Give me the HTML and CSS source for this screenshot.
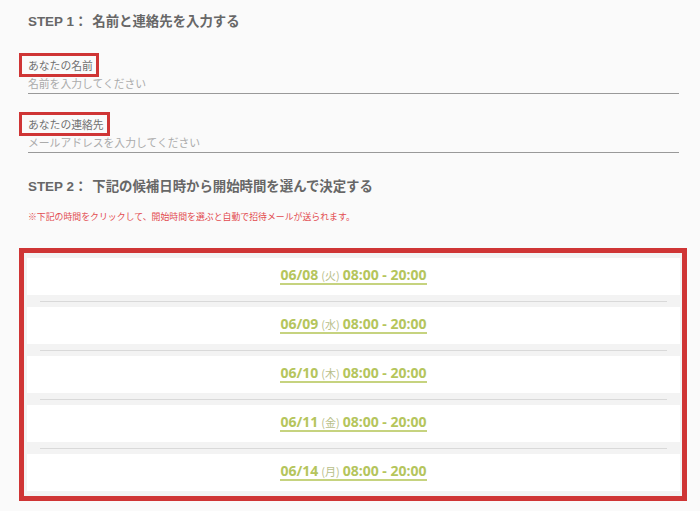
FILE: index.html
```html
<!DOCTYPE html>
<html lang="ja">
<head>
<meta charset="utf-8">
<title>日程調整</title>
<link rel="stylesheet" href="styles.css">
</head>
<body>
<main class="page">
  <h2 class="step"><span class="step-no">STEP 1：</span>名前と連絡先を入力する</h2>

  <div class="field field-first">
    <label class="field-label" for="name">あなたの名前</label>
    <input class="field-input" id="name" type="text" placeholder="名前を入力してください">
  </div>

  <div class="field">
    <label class="field-label" for="mail">あなたの連絡先</label>
    <input class="field-input" id="mail" type="text" placeholder="メールアドレスを入力してください">
  </div>

  <h2 class="step step-second"><span class="step-no">STEP 2：</span>下記の候補日時から開始時間を選んで決定する</h2>
  <p class="note">※下記の時間をクリックして、開始時間を選ぶと自動で招待メールが送られます。</p>

  <section class="slots">
    <div class="slot"><a class="slot-link" href="#"><span>06/08</span><span class="wd">(火)</span><span>08:00 - 20:00</span></a></div>
    <hr class="sep">
    <div class="slot"><a class="slot-link" href="#"><span>06/09</span><span class="wd">(水)</span><span>08:00 - 20:00</span></a></div>
    <hr class="sep">
    <div class="slot"><a class="slot-link" href="#"><span>06/10</span><span class="wd">(木)</span><span>08:00 - 20:00</span></a></div>
    <hr class="sep">
    <div class="slot"><a class="slot-link" href="#"><span>06/11</span><span class="wd">(金)</span><span>08:00 - 20:00</span></a></div>
    <hr class="sep">
    <div class="slot"><a class="slot-link" href="#"><span>06/14</span><span class="wd">(月)</span><span>08:00 - 20:00</span></a></div>
  </section>
</main>
</body>
</html>
```

FILE: styles.css
```css
html, body {
  margin: 0;
  padding: 0;
  background: #fafafa;
}

.page {
  padding: 12px 21px 0 28px;
  font-family: "Noto Sans CJK JP", sans-serif;
}

.step {
  margin: 0;
  font-family: "Liberation Sans", "Noto Sans CJK JP", sans-serif;
  font-size: 13.4px;
  line-height: 20px;
  font-weight: bold;
  color: #676767;
}

.step-no {
  margin-right: 5px;
}

.step-second {
  margin-top: 24px;
}

.field {
  display: flex;
  flex-direction: column;
  align-items: flex-start;
  margin-top: 18px;
}

.field-first {
  margin-top: 21px;
}

.field-label {
  display: inline-block;
  margin-left: -9px;
  padding: 1px 3px 1px 6px;
  border: 3px solid #cf3535;
  font-size: 10.8px;
  line-height: 16px;
  color: #707070;
}

.field-input {
  box-sizing: border-box;
  width: 100%;
  margin: -3px 0 0 0;
  padding: 0 0 2px 0;
  border: none;
  border-bottom: 1px solid #999;
  background: transparent;
  font-family: "Noto Sans CJK JP", sans-serif;
  font-size: 10.8px;
  line-height: 16px;
  height: 20px;
  color: #555;
  outline: none;
}

.field-input::placeholder {
  color: #ababab;
}

.note {
  margin: 14px 0 0 0;
  font-size: 8.9px;
  line-height: 12px;
  color: #e24a4f;
}

.slots {
  margin: 25px -8px 0 -9px;
  border: 5px solid #cf3535;
  background: #f3f3f3;
  padding: 5px 2px 5px 3px;
  display: flex;
  flex-direction: column;
}

.slot {
  height: 37px;
  background: #fff;
  display: flex;
  align-items: center;
  justify-content: center;
}

.sep {
  margin: 6px 13px 5px 13px;
  border: none;
  border-top: 1px solid #d9d9d9;
  height: 0;
}

.slot-link {
  display: inline-flex;
  align-items: baseline;
  font-family: "Open Sans", "Noto Sans CJK JP", sans-serif;
  font-size: 14px;
  line-height: 16px;
  font-weight: bold;
  color: #b5c55c;
  text-decoration: none;
  border-bottom: 2px solid #c6d37f;
  margin: -2px 0 0 0;
}

.wd {
  font-family: "Noto Sans CJK JP", sans-serif;
  font-weight: normal;
  font-size: 11px;
  color: #b9c08a;
  margin: 0 3px 0 3px;
}
```
